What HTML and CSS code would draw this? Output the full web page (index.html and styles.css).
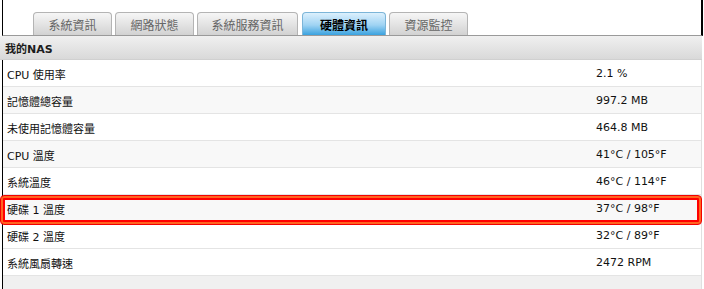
FILE: index.html
```html
<!DOCTYPE html>
<html>
<head>
<meta charset="utf-8">
<link rel="stylesheet" href="styles.css">
</head>
<body>
<div class="page">
  <div class="top">
    <div class="tabs">
      <div class="tab">系統資訊</div>
      <div class="tab">網路狀態</div>
      <div class="tab wide">系統服務資訊</div>
      <div class="tab active">硬體資訊</div>
      <div class="tab">資源監控</div>
    </div>
  </div>
  <div class="header">我的NAS</div>
  <div class="table">
    <div class="row"><span class="label">CPU 使用率</span><span class="value">2.1 %</span></div>
    <div class="row alt"><span class="label">記憶體總容量</span><span class="value">997.2 MB</span></div>
    <div class="row"><span class="label">未使用記憶體容量</span><span class="value">464.8 MB</span></div>
    <div class="row alt"><span class="label">CPU 溫度</span><span class="value">41°C / 105°F</span></div>
    <div class="row"><span class="label">系統溫度</span><span class="value">46°C / 114°F</span></div>
    <div class="row alt"><span class="label">硬碟 1 溫度</span><span class="value">37°C / 98°F</span></div>
    <div class="row"><span class="label">硬碟 2 溫度</span><span class="value">32°C / 89°F</span></div>
    <div class="row"><span class="label">系統風扇轉速</span><span class="value">2472 RPM</span></div>
    <div class="footer"></div>
  </div>
  <div class="highlight"></div>
</div>
</body>
</html>
```

FILE: styles.css
```css
html, body {
  margin: 0;
  padding: 0;
  background: #fff;
}
body {
  font-family: "DejaVu Sans", Verdana, "Noto Sans CJK TC", sans-serif;
  font-size: 11px;
  color: #111;
  width: 704px;
  height: 289px;
  overflow: hidden;
}
.page {
  position: relative;
  width: 704px;
  height: 289px;
}
.top {
  margin-left: 2px;
  width: 698px;
  height: 35px;
  border-left: 1px solid #000;
  border-right: 2px solid #000;
  border-bottom: 1px solid #9a9a9a;
  display: flex;
  align-items: flex-end;
}
.tabs {
  display: flex;
  gap: 3px;
  padding-left: 30px;
  align-items: flex-end;
}
.tab {
  box-sizing: border-box;
  width: 79px;
  height: 23px;
  border: 1px solid #b4b4b4;
  border-bottom: none;
  border-radius: 4px 4px 0 0;
  background: linear-gradient(#f6f6f6, #d2d2d2);
  color: #666;
  font-size: 12px;
  font-family: "Noto Sans CJK TC", sans-serif;
  display: flex;
  align-items: center;
  justify-content: center;
}
.tab.wide {
  width: 101px;
}
.tab.active {
  width: 84px;
  margin-left: 1px;
  border-color: #7cb5d8;
  background: linear-gradient(#dcf0fd, #9fd3f3 55%, #3aa2df);
  color: #000;
  font-weight: bold;
}
.header {
  height: 24px;
  width: 702px;
  border-bottom: 1px solid #d0d0d0;
  background: linear-gradient(#f0f0f0, #d9d9d9);
  font-weight: bold;
  color: #1c1c1c;
  display: flex;
  align-items: center;
  padding-left: 5px;
  box-sizing: border-box;
}
.table {
  margin-left: 2px;
  width: 698px;
  border-left: 1px solid #000;
  border-right: 1px solid #e0e0e0;
}
.row {
  height: 26px;
  border-bottom: 1px solid #e4e4e4;
  display: flex;
  align-items: center;
  background: #fff;
  padding-top: 1px;
  box-sizing: border-box;
  height: 27px;
}
.row.alt {
  background: #f8f8f8;
}
.label {
  width: 593px;
  padding-left: 4px;
  box-sizing: border-box;
}
.value {
  flex: 1;
}
.footer {
  height: 14px;
  background: #f0f0f0;
}
.highlight {
  position: absolute;
  left: 0;
  top: 195px;
  width: 702px;
  height: 30px;
  box-sizing: border-box;
  border: 1px solid #f20000;
  border-radius: 4px;
  box-shadow: inset 0 0 0 2px #ff6420, inset 0 0 0 4px #ff0000;
}
```
